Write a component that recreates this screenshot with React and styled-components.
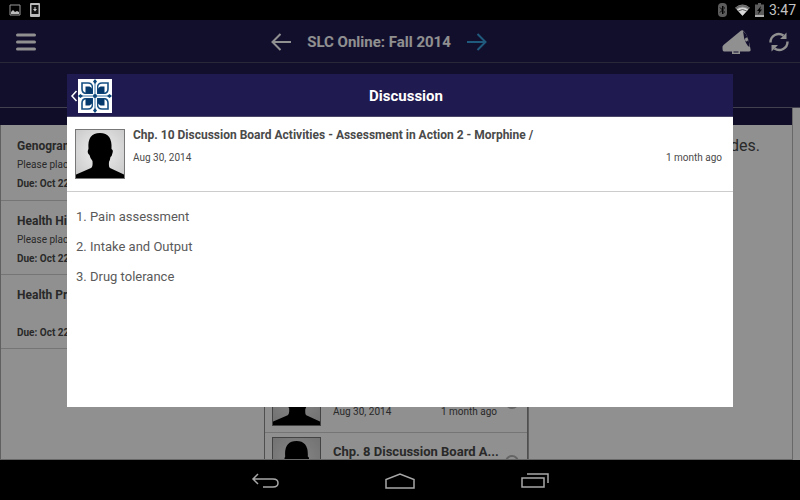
import styled, { createGlobalStyle } from "styled-components";

const GlobalStyle = createGlobalStyle`
  * {
    box-sizing: border-box;
  }
  body {
    margin: 0;
    background: #000;
    color: #4a4a4a;
    font-family: Roboto, "Liberation Sans", sans-serif;
    font-size: 10px;
  }
  h1, h2, h3, p, ul, ol {
    margin: 0;
    padding: 0;
  }
  ul {
    list-style: none;
  }
  svg {
    display: block;
    flex-shrink: 0;
  }
`;

const Screen = styled.div`
  height: 100vh;
  display: flex;
  flex-direction: column;
`;

const StatusBar = styled.div`
  display: flex;
  justify-content: space-between;
  align-items: center;
  height: 20px;
  padding: 0 4px 0 9px;
  background: #000;
  color: #c4c4c4;
  font-size: 14px;
  line-height: 20px;
`;

const StatusGroup = styled.div`
  display: flex;
  align-items: center;
  gap: ${(props) => props.$gap}px;
`;

const Stage = styled.div`
  position: relative;
  flex: 1;
  min-height: 0;
  overflow: hidden;
`;

const Page = styled.div`
  height: 100%;
  display: flex;
  flex-direction: column;
  background: #fff;
`;

const Header = styled.header`
  display: flex;
  justify-content: space-between;
  align-items: center;
  height: 43px;
  padding: 2px 11px 0 16px;
  background: #211b51;
  border-bottom: 1px solid #4b4863;
  color: #fff;
`;

const IconButton = styled.button`
  display: flex;
  padding: 0;
  border: none;
  background: none;
  color: ${(props) => props.$color || "inherit"};
  cursor: pointer;
`;

const CourseNav = styled.div`
  display: flex;
  align-items: center;
  gap: 16px;
`;

const CourseTitle = styled.h1`
  font-size: 15px;
  font-weight: 700;
  line-height: 20px;
`;

const HeaderActions = styled.div`
  display: flex;
  align-items: center;
  gap: 17px;
`;

const TabStrip = styled.div`
  height: 45px;
  background: #211b51;
  border-bottom: 1px solid #77738c;
`;

const Board = styled.div`
  flex: 1;
  min-height: 0;
  display: flex;
  flex-direction: column;
  margin-right: 7px;
  border-right: 1px solid #b8b8b8;
  border-bottom: 1px solid #b8b8b8;
`;

const BoardBar = styled.div`
  height: 17px;
  background: #1d1849;
`;

const Columns = styled.div`
  flex: 1;
  min-height: 0;
  display: grid;
  grid-template-columns: repeat(3, 1fr);
`;

const Column = styled.section`
  min-width: 0;
  overflow: hidden;
  border-left: 1px solid #aaa;
`;

const ThreadColumn = styled(Column)`
  padding-top: 248px;
  border-left-color: #8c8c8c;
  border-right: 1px solid #8c8c8c;
`;

const Task = styled.li`
  height: ${(props) => (props.$first ? 76 : 74)}px;
  padding: ${(props) => (props.$first ? 12 : 11)}px 16px 0;
  border-bottom: 1px solid #d0d0d0;
  white-space: nowrap;
`;

const TaskTitle = styled.h2`
  font-size: 12px;
  font-weight: 700;
  line-height: 18px;
`;

const TaskText = styled.p`
  height: 20px;
  line-height: 20px;
`;

const TaskDue = styled.p`
  font-weight: 700;
  line-height: 18px;
`;

const Thread = styled.li`
  display: flex;
  gap: 12px;
  height: 60px;
  padding: 4px 8px 5px 7px;
  border-bottom: 1px solid #d0d0d0;
`;

const ThreadBody = styled.div`
  flex: 1;
  min-width: 0;
  padding-top: 5px;
`;

const ThreadTitle = styled.h3`
  height: 20px;
  font-size: 13px;
  font-weight: 700;
  line-height: 20px;
  white-space: nowrap;
`;

const MetaRow = styled.div`
  display: flex;
  justify-content: space-between;
  line-height: 20px;
`;

const ThreadMeta = styled(MetaRow)`
  padding-right: 8px;
`;

const Dot = styled.span`
  align-self: center;
  flex-shrink: 0;
  width: 14px;
  height: 14px;
  margin-left: -12px;
  border: 2px solid #b4b4b4;
  border-radius: 50%;
`;

const Notice = styled.p`
  padding: 10px 32px;
  font-size: 16px;
  line-height: 22px;
  text-align: right;
`;

const Overlay = styled.div`
  position: absolute;
  inset: 0;
  display: flex;
  justify-content: center;
  align-items: center;
  padding-top: 1px;
  background: rgba(0, 0, 0, 0.435);
`;

const Dialog = styled.div`
  width: 83.25%;
  height: 75.75%;
  overflow: auto;
  background: #fff;
`;

const DialogHeader = styled.div`
  display: grid;
  grid-template-columns: 48px 1fr 36px;
  align-items: center;
  height: 43px;
  padding: 1px 3px 0;
  background: #1f1b50;
  border-bottom: 1px solid #4a4668;
  color: #fff;
`;

const DialogTitle = styled.h2`
  font-size: 15px;
  font-weight: 700;
  line-height: 20px;
  text-align: center;
`;

const Post = styled.div`
  display: flex;
  gap: 8px;
  height: 75px;
  padding: 12px 11px 0 8px;
  border-bottom: 1px solid #ccc;
`;

const PostBody = styled.div`
  flex: 1;
  min-width: 0;
`;

const PostTitle = styled.h3`
  margin-bottom: 7px;
  font-size: 12px;
  font-weight: 700;
  line-height: 12px;
`;

const Topics = styled.ol`
  padding: 10px 9px;
  list-style-position: inside;
  color: #5a5a5a;
  font-size: 13px;
  line-height: 30px;
`;

const SystemNav = styled.nav`
  display: flex;
  justify-content: center;
  align-items: center;
  gap: 106px;
  height: 40px;
  padding-top: 1px;
  background: #000;
  color: #a8a8a8;
`;

const tasks = [
  { title: "Genogram", text: "Please place", due: "Due: Oct 22" },
  { title: "Health History", text: "Please place", due: "Due: Oct 22" },
  { title: "Health Promotion", text: "", due: "Due: Oct 22" },
];

const threads = [
  { title: "", date: "Aug 30, 2014", age: "1 month ago" },
  { title: "Chp. 8 Discussion Board A...", date: "", age: "" },
];

function Avatar({ size, id }) {
  return (
    <svg width={size} height={size} viewBox="0 0 50 50" aria-hidden="true">
      <defs>
        <radialGradient id={id} cx="50%" cy="45%" r="75%">
          <stop offset="0" stopColor="#f0f0f0" />
          <stop offset="1" stopColor="#c4c4c4" />
        </radialGradient>
      </defs>
      <rect width="50" height="50" fill={`url(#${id})`} />
      <path
        d="M0 50V46L16 39Q18 38 17.500 32Q15 29 14.500 26Q12 24 13 21L13.500 20Q12 4 25 4Q37.500 4 36.500 20Q38.500 21 37.500 24Q37 27 35.500 28Q35 31 34 33Q33.500 38 35 39L50 46V50Z"
        fill="#000"
      />
      <rect x=".5" y=".5" width="49" height="49" fill="none" stroke="#777" />
    </svg>
  );
}

function Quarter({ transform }) {
  return (
    <g transform={transform}>
      <path
        d="M-2.500 -2.500V-9Q-3 -13 -7 -13H-13V-7Q-13 -3 -9 -2.500Z"
        fill="#fff"
        stroke="#154f82"
        strokeWidth="1.600"
      />
      <path d="M-9.500 -2.500V-9.500H-5.500Q-3 -9 -2.500 -6V-2.500Z" fill="#063a6d" />
    </g>
  );
}

function Logo() {
  return (
    <svg width="34" height="34" viewBox="-17 -17 34 34" aria-hidden="true">
      <rect x="-17" y="-17" width="34" height="34" fill="#fff" />
      <Quarter />
      <Quarter transform="scale(-1 1)" />
      <Quarter transform="scale(1 -1)" />
      <Quarter transform="scale(-1 -1)" />
      <path d="M-14 0H14M0 -14V14" stroke="#fff" strokeWidth="4" />
      <path d="M-14 0H14M0 -14V14" stroke="#9dbad2" strokeWidth="2" />
      <g fill="#0b477b">
        <circle r="2" />
        <path d="M0 -17L2 -14.500L0 -12L-2 -14.500ZM0 17L2 14.500L0 12L-2 14.500ZM-17 0L-14.500 -2L-12 0L-14.500 2ZM17 0L14.500 -2L12 0L14.500 2Z" />
      </g>
    </svg>
  );
}

function Arrow({ right }) {
  return (
    <svg width="20" height="18" viewBox="0 0 20 18" aria-hidden="true">
      <path
        d={right ? "M0 9H18M10.500 1L18.500 9L10.500 17" : "M20 9H2M9.500 1L1.500 9L9.500 17"}
        fill="none"
        stroke="currentColor"
        strokeWidth="2"
      />
    </svg>
  );
}

function Megaphone() {
  return (
    <svg width="30" height="26" viewBox="0 0 30 26" aria-hidden="true">
      <path
        d="M.5 19Q0 17.500 1.500 16L18.500 2Q20.500 .5 22 2.500Q26 6 28.500 20Q29 22.500 27 22.500H18V25H10V22.500H2Q.5 22.500 .5 19Z"
        fill="currentColor"
      />
      <path d="M11.500 22.500H16.500V23.500H11.500Z" fill="#211b51" />
      <path
        d="M21 2Q21.500 9 24 14Q25.500 17 27.500 18Q27.500 13 25.500 8.500Q24 4 21 2Z"
        fill="#211b51"
      />
      <path d="M23 1.500Q27 6 29 17" fill="none" stroke="#211b51" strokeDasharray="2 2" />
      <ellipse cx="24.500" cy="10.500" rx="1.500" ry="2" fill="currentColor" />
    </svg>
  );
}

function Refresh() {
  return (
    <svg width="20" height="20" viewBox="0 0 20 20" aria-hidden="true">
      <path
        d="M1.500 10.500A8.300 8.300 0 0 1 14.500 3.500M18.500 9.500A8.300 8.300 0 0 1 5.500 16.500"
        fill="none"
        stroke="currentColor"
        strokeWidth="2.400"
      />
      <path d="M17.500 .5V7H11ZM2.500 19.500V13H9Z" fill="currentColor" />
    </svg>
  );
}

function StatusIcons() {
  return (
    <StatusGroup $gap={5}>
      <StatusGroup $gap={8}>
        <svg width="9" height="14" viewBox="0 0 9 14" aria-hidden="true">
          <rect width="9" height="14" rx="4" fill="#5c5c5c" />
          <path d="M2 4.500L6.500 9L4.500 11V3L6.500 5L2 9.500" fill="none" stroke="#000" />
        </svg>
        <svg width="15" height="12" viewBox="0 0 16 12" aria-hidden="true">
          <path d="M0 3.500Q8 -3 16 3.500L8 12Z" fill="#888" />
          <path d="M2 5.500Q8 1 14 5.500L8 12Z" fill="#d8d8d8" />
          <path d="M1 4Q8 -1 15 4M3.500 7Q8 4 12.500 7" fill="none" stroke="#555" />
        </svg>
      </StatusGroup>
      <StatusGroup $gap={5}>
        <svg width="9" height="14" viewBox="0 0 9 14" aria-hidden="true">
          <path d="M3 0H6V1.500H9V14H0V1.500H3Z" fill="#5c5c5c" />
          <path d="M0 12H9V14H0Z" fill="#b0b0b0" />
          <path d="M6 3L2 8H4L3 11.500L7 6.500H5Z" fill="#000" />
        </svg>
        <span>3:47</span>
      </StatusGroup>
    </StatusGroup>
  );
}

export default function App() {
  return (
    <Screen>
      <GlobalStyle />
      <StatusBar>
        <StatusGroup $gap={9}>
          <svg width="12" height="12" viewBox="0 0 12 12" aria-hidden="true">
            <path d="M1 1H11V11H1Z" fill="none" stroke="#999" />
            <path d="M2 10V8L4 6L6 8L8 7L10 8V10Z" fill="#bbb" />
          </svg>
          <svg width="10" height="14" viewBox="0 0 10 14" aria-hidden="true">
            <rect width="10" height="14" rx="1" fill="#bbb" />
            <path d="M1.500 2H8.500V11H1.500Z" fill="#111" />
            <path d="M4.500 4H5.500V6H7L5 8.500L3 6H4.500Z" fill="#ccc" />
          </svg>
        </StatusGroup>
        <StatusIcons />
      </StatusBar>

      <Stage>
        <Page>
          <Header>
            <IconButton aria-label="Menu">
              <svg width="20" height="18" viewBox="0 0 20 18" aria-hidden="true">
                <path
                  d="M1.500 2H18.500M1.500 9H18.500M1.500 16H18.500"
                  stroke="currentColor"
                  strokeWidth="3"
                  strokeLinecap="round"
                />
              </svg>
            </IconButton>
            <CourseNav>
              <IconButton aria-label="Previous course">
                <Arrow />
              </IconButton>
              <CourseTitle>SLC Online: Fall 2014</CourseTitle>
              <IconButton aria-label="Next course" $color="#37a0dc">
                <Arrow right />
              </IconButton>
            </CourseNav>
            <HeaderActions>
              <IconButton aria-label="Announcements">
                <Megaphone />
              </IconButton>
              <IconButton aria-label="Refresh">
                <Refresh />
              </IconButton>
            </HeaderActions>
          </Header>
          <TabStrip />
          <Board>
            <BoardBar />
            <Columns>
              <Column>
                <ul>
                  {tasks.map((task, index) => (
                    <Task key={task.title} $first={index === 0}>
                      <TaskTitle>{task.title}</TaskTitle>
                      <TaskText>{task.text}</TaskText>
                      <TaskDue>{task.due}</TaskDue>
                    </Task>
                  ))}
                </ul>
              </Column>
              <ThreadColumn as="ul">
                {threads.map((thread, index) => (
                  <Thread key={index}>
                    <Avatar size={49} id={`thread-${index}`} />
                    <ThreadBody>
                      <ThreadTitle>{thread.title}</ThreadTitle>
                      <ThreadMeta>
                        <span>{thread.date}</span>
                        <span>{thread.age}</span>
                      </ThreadMeta>
                    </ThreadBody>
                    <Dot />
                  </Thread>
                ))}
              </ThreadColumn>
              <Column>
                <Notice>des.</Notice>
              </Column>
            </Columns>
          </Board>
        </Page>

        <Overlay>
          <Dialog role="dialog" aria-labelledby="dialog-title">
            <DialogHeader>
              <IconButton aria-label="Back">
                <svg width="8" height="34" viewBox="0 0 8 34" aria-hidden="true">
                  <path d="M6.500 12L2 17L6.500 22" fill="none" stroke="#fff" strokeWidth="1.500" />
                </svg>
                <Logo />
              </IconButton>
              <DialogTitle id="dialog-title">Discussion</DialogTitle>
            </DialogHeader>
            <Post>
              <Avatar size={50} id="post" />
              <PostBody>
                <PostTitle>
                  Chp. 10 Discussion Board Activities - Assessment in Action 2 - Morphine /
                </PostTitle>
                <MetaRow>
                  <span>Aug 30, 2014</span>
                  <span>1 month ago</span>
                </MetaRow>
              </PostBody>
            </Post>
            <Topics>
              <li>Pain assessment</li>
              <li>Intake and Output</li>
              <li>Drug tolerance</li>
            </Topics>
          </Dialog>
        </Overlay>
      </Stage>

      <SystemNav>
        <IconButton aria-label="Back">
          <svg width="28" height="16" viewBox="0 0 28 16" aria-hidden="true">
            <path
              d="M7 1L2 6L7 11M2 6H22Q27 6 27 10Q27 14 22 14H12"
              fill="none"
              stroke="currentColor"
              strokeWidth="1.500"
            />
          </svg>
        </IconButton>
        <IconButton aria-label="Home">
          <svg width="30" height="16" viewBox="0 0 30 16" aria-hidden="true">
            <path
              d="M1 15V6.500L15 1L29 6.500V15Z"
              fill="none"
              stroke="currentColor"
              strokeWidth="1.500"
            />
          </svg>
        </IconButton>
        <IconButton aria-label="Recent apps">
          <svg width="28" height="15" viewBox="0 0 28 15" aria-hidden="true">
            <path
              d="M1 5H23V14H1ZM6 1H27V10"
              fill="none"
              stroke="currentColor"
              strokeWidth="1.500"
            />
          </svg>
        </IconButton>
      </SystemNav>
    </Screen>
  );
}
